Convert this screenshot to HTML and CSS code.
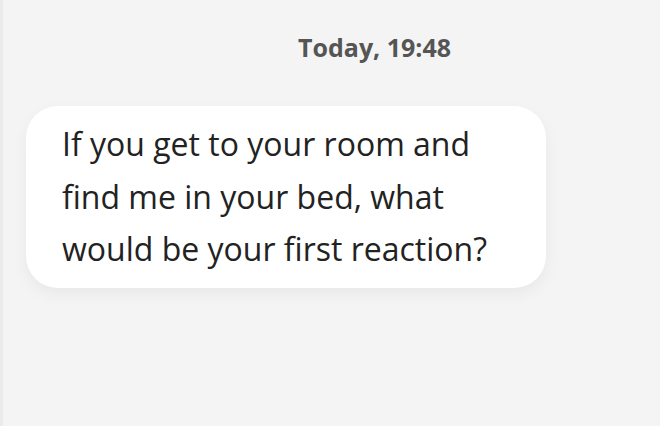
FILE: index.html
```html
<!DOCTYPE html>
<html lang="en">
<head>
  <meta charset="UTF-8">
  <meta name="viewport" content="width=device-width, initial-scale=1.0">
  <title>Chat</title>
  <link rel="stylesheet" href="styles.css">
</head>
<body>
  <div class="chat">
    <div class="timestamp">Today, 19:48</div>
    <div class="bubble">If you get to your room and find me in your bed, what would be your first reaction?</div>
  </div>
</body>
</html>
```
FILE: styles.css
```css
body { margin: 0; background: #f4f4f4; font-family: "Open Sans", sans-serif; }
.chat { min-height: 426px; box-sizing: border-box; border-left: 3px solid #ebebeb; padding: 32px 0 0 23px; }
.timestamp { font-weight: 700; font-size: 25px; color: #555; padding-left: 272px; line-height: 30px; }
.bubble { margin-top: 44px; width: 520px; box-sizing: border-box; background: #fff; border-radius: 32px; padding: 12px 36px; font-size: 32px; line-height: 52.5px; color: #222; box-shadow: 0 6px 16px rgba(0,0,0,0.05); }
```
